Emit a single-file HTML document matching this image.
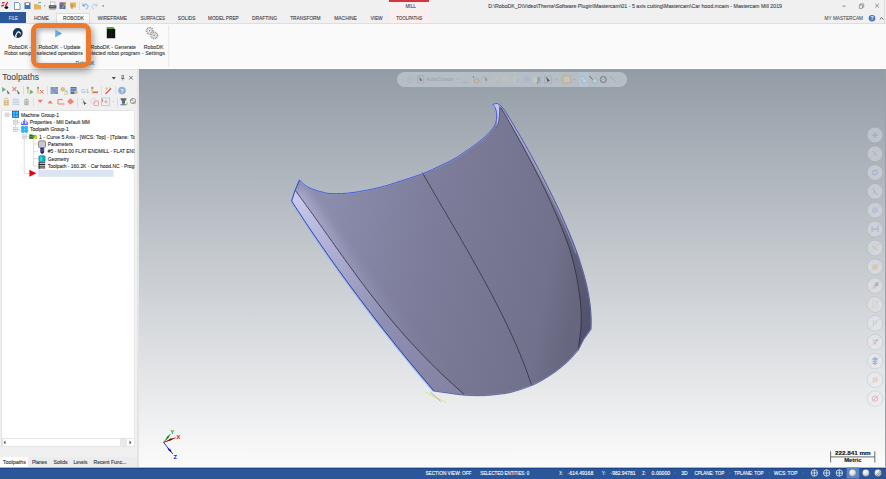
<!DOCTYPE html>
<html><head><meta charset="utf-8">
<style>
*{margin:0;padding:0;box-sizing:border-box}
html,body{width:886px;height:479px;overflow:hidden;background:#f0f0f0;font-family:"Liberation Sans",sans-serif}
.a{position:absolute}
.t{position:absolute;white-space:nowrap;line-height:1;color:#444}
#title{left:0;top:0;width:886px;height:24px;background:#f0f0f0}
#ribbon{left:0;top:23.3px;width:886px;height:45.7px;background:#fafafa;border-top:1.3px solid #dedede;border-bottom:1.2px solid #fff}
#left{left:0;top:69px;width:139px;height:398px;background:#f0f0f0}
#view{left:139px;top:69px;width:747px;height:398px;background:linear-gradient(#939ca6,#fbfbfb)}
#status{left:0;top:467px;width:886px;height:12px;background:linear-gradient(#a8b8d4 0,#a8b8d4 .8px,#1c4488 .8px,#1c4488 1.8px,#2b579a 2.4px)}
.tab{font-size:5.3px;color:#444;top:15.5px}
.rb{font-size:5.35px;color:#444}
.tr{font-size:5px;color:#222}
.st{font-size:5px;color:#fff;top:471px}
</style></head><body>
<div id="title" class="a">
  <!-- quick access -->
  <svg class="a" style="left:0;top:0" width="110" height="12">
    <path d="M2.2 2.3L4.8 1.9L4.3 3.3L1.8 3.7Z M1.2 5.3L4.3 4.5L3.8 6.1L1.2 6.8Z M4.6 6L7.3 1.8L8.3 2.1L6.3 6.3Z" fill="#dc1438"/>
    <ellipse cx="6.4" cy="7.6" rx="1.9" ry="1.3" fill="#111"/>
    <path d="M14.5 2.5h4l1.5 1.5v5.5h-5.5z" fill="#fff" stroke="#5b7fb8" stroke-width=".8"/>
    <rect x="24.5" y="2.5" width="6" height="6.5" fill="#3b73b9"/><rect x="25.8" y="2.8" width="3.4" height="2.2" fill="#fff"/><rect x="25.8" y="2.5" width="3.4" height=".7" fill="#e05a4a"/>
    <path d="M34 4h3l1 1h3v4.5h-7z" fill="#e4b460"/><path d="M38 3.5l2-1.5 1 1" stroke="#3a9a5a" fill="none" stroke-width=".8"/>
    <circle cx="44.8" cy="5.8" r=".6" fill="#666"/>
    <rect x="50.3" y="2" width="4.6" height="3.2" fill="#fff" stroke="#8a8a8a" stroke-width=".45"/><path d="M48.8 5.2h7.6v3.2h-7.6z" fill="#5a5a5a"/><rect x="49.4" y="8.3" width="6.4" height="1.3" rx=".4" fill="#8a8a8a"/><rect x="50.2" y="6" width="4.8" height=".6" fill="#9a9a9a"/>
    <rect x="59.5" y="2.5" width="6" height="6.5" fill="#3b73b9"/><rect x="60.5" y="2.5" width="4" height="2" fill="#e05a4a"/><path d="M62 8.5l4-6" stroke="#e8a020" stroke-width="1.2"/>
    <rect x="70" y="2.5" width="6" height="5" fill="#e4b460"/><rect x="71.5" y="4" width="1" height="5" fill="#b08040"/>
    <rect x="79" y="2" width=".5" height="8" fill="#ccc"/>
    <path d="M83 3.5v2.5h2.5 M83.2 5.8c1.5-2.5 4.5-2 4.8 0.5 0 1.5-1 2.5-2 3" stroke="#5b8ed0" stroke-width=".8" fill="none"/>
    <path d="M97 3.5v2.5h-2.5 M96.8 5.8c-1.5-2.5-4.5-2-4.8 0.5 0 1.5 1 2.5 2 3" stroke="#a8c0e0" stroke-width=".8" fill="none"/>
    <rect x="102.5" y="5" width="1.2" height="1.6" fill="#777"/>
  </svg>
  <div class="a" style="left:884.3px;top:0;width:.8px;height:24px;background:#dcdcdc"></div>
  <!-- contextual tab -->
  <div class="a" style="left:389px;top:0;width:40px;height:24px;background:#fbeeee"></div>
  <div class="a" style="left:389px;top:0;width:40px;height:1.8px;background:#d4343e"></div>
  <svg class="a" style="left:840px;top:3px" width="8" height="6"><path d="M2.3 3.1h3.4" stroke="#555" stroke-width=".6"/></svg>
  <svg class="a" style="left:858px;top:3px" width="8" height="6"><rect x="1.2" y="2" width="3.2" height="3.2" fill="none" stroke="#555" stroke-width=".5"/><path d="M2.4 2V.9h3.3v3.3h-1.3" fill="none" stroke="#555" stroke-width=".5"/></svg>
  <svg class="a" style="left:874px;top:3px" width="6" height="6"><path d="M1.2 .8l3.8 3.8M5 .8L1.2 4.6" stroke="#444" stroke-width=".55"/></svg>
  <!-- tabs -->
  <div class="a" style="left:0;top:12.2px;width:26.2px;height:11.6px;background:#2b579a"></div>
  <div class="a" style="left:55.6px;top:13px;width:34.8px;height:11.6px;background:#fafafa;border:1px solid #dcdcdc;border-bottom:none"></div>
  <svg class="a" style="left:867px;top:14px" width="18" height="9"><circle cx="5" cy="4.3" r="3.3" fill="#4a78b8"/><text x="5" y="6.4" font-size="5" fill="#fff" text-anchor="middle" font-family="Liberation Sans" font-weight="bold">?</text><path d="M12.8 5.4l1.8-1.7 1.8 1.7" stroke="#333" stroke-width=".8" fill="none"/></svg>
</div>

<div id="ribbon" class="a">
  <svg class="a" style="left:0;top:-0.6px" width="175" height="44">
    <circle cx="17.8" cy="9" r="4.9" fill="#17365d"/>
    <path d="M15.4 12.2l1.6-3.2c.8-1.4 2.6-1.6 3.4.2" stroke="#fff" stroke-width="1.1" fill="none"/><path d="M14.8 12.6h2.2" stroke="#fff" stroke-width=".8"/><circle cx="20.4" cy="9.8" r=".6" fill="#fff"/>
    <defs><linearGradient id="gPlay" x1="0" y1="0" x2="1" y2="1"><stop offset="0" stop-color="#8ccff0"/><stop offset="1" stop-color="#2a8ad8"/></linearGradient></defs><path d="M55.2 5.6v7.6l6.8-3.8z" fill="url(#gPlay)"/>
    <path d="M106.8 3.6h6.6l1.8 1.8v8.9h-8.4z" fill="#121212"/><path d="M106.8 3.6h6.6l1.3 1.3h-7.9z" fill="#5aa02c"/><path d="M109 6v7.5M111.5 6v7.5" stroke="#2a2a2a" stroke-width=".4"/>
    <circle cx="149.6" cy="6.8" r="3.3" fill="#fafafa" stroke="#8a8a8a" stroke-width="1.3" stroke-dasharray="1 .75"/><circle cx="149.6" cy="6.8" r="2.2" fill="none" stroke="#9a9a9a" stroke-width=".5"/>
    <circle cx="154.2" cy="11.4" r="3.3" fill="#fafafa" stroke="#8a8a8a" stroke-width="1.3" stroke-dasharray="1 .75"/><circle cx="154.2" cy="11.4" r="2.2" fill="none" stroke="#9a9a9a" stroke-width=".5"/>
    <circle cx="149.6" cy="6.8" r=".8" fill="#777"/><circle cx="154.2" cy="11.4" r=".8" fill="#777"/>
    <rect x="168.5" y="1" width=".6" height="42" fill="#dcdcdc"/>
  </svg>
</div>


<div id="left" class="a">
  <div class="a" style="left:0;top:0;width:139px;height:1.3px;background:#e2e2e2"></div>
  <svg class="a" style="left:110px;top:4.5px" width="28" height="8">
    <path d="M1.8 3l2 2.5 2-2.5z" fill="#444"/>
    <path d="M11.5 1.5h2.5M12 1.5v3h1.5v-3M11 4.5h3.5M12.75 4.5v2" stroke="#555" stroke-width=".6" fill="none"/>
    <path d="M19.2 2l3.5 3.5M22.7 2l-3.5 3.5" stroke="#444" stroke-width=".7"/>
  </svg>
  <div class="a" style="left:137.4px;top:0;width:1.6px;height:398px;background:#e4e4e4"></div>
</div>

<!-- left toolbar icons -->
<svg class="a" style="left:0;top:84px" width="139" height="24">
 <g transform="translate(0,-84)">
  <!-- row1 -->
  <path d="M2 87v5l4.2-2.5z" fill="#6db291"/><path d="M6.6 89.8l3.4 3.6h-1.4l-.7 1.1z" fill="#666"/>
  <path d="M12.5 87.2l3.8 3.6M16.3 87.2l-3.8 3.6" stroke="#e88272" stroke-width="1.1"/><path d="M16.8 89.8l3.4 3.6h-1.4l-.7 1.1z" fill="#666"/>
  <rect x="23" y="86" width=".6" height="9" fill="#d0d0d0"/>
  <rect x="27" y="87" width="1.6" height="6.5" fill="#e8c860"/><rect x="26.8" y="86.8" width="2" height="2" fill="#999"/><path d="M29.8 89.5v5l3.8-2.5z" fill="#6db291"/>
  <rect x="37.2" y="87" width="1.6" height="6.5" fill="#e8c860"/><rect x="37" y="86.8" width="2" height="2" fill="#999"/><path d="M40 90l3.5 3.5M43.5 90l-3.5 3.5" stroke="#e07060" stroke-width="1"/>
  <rect x="47.2" y="86" width=".6" height="9" fill="#d0d0d0"/>
  <rect x="50.6" y="87" width="7.4" height="7" fill="#6582b0"/><path d="M50.6 89l2-2M50.6 91l4-4M50.6 93l6-6M51.6 94l6.4-6.4M53.6 94l4.4-4.4M55.6 94l2.4-2.4M50.6 89l5 5M50.6 91l3 3M52.6 87l5.4 5.4M54.6 87l3.4 3.4" stroke="#c4d2e6" stroke-width=".45"/>
  <circle cx="62.8" cy="89.3" r="2.4" fill="#dcc08c"/><rect x="64.3" y="90.2" width="3.6" height="4.6" fill="#e4f2f0" stroke="#d8c8a0" stroke-width=".5"/><path d="M65.2 91.5h1.8v2" stroke="#6ab" stroke-width=".5" fill="none"/>
  <rect x="70.5" y="87" width="6" height="7" fill="#4a78b0"/><path d="M71 88.5h5M71 90h5M71 91.5h5" stroke="#b8cce8" stroke-width=".5"/><circle cx="76" cy="92.5" r="1.8" fill="#e8b870"/>
  <text x="81" y="93.2" font-size="6" fill="#8ab0d8" font-family="Liberation Sans">G1</text>
  <rect x="91.5" y="87" width="1.6" height="6.5" fill="#e8c860"/><rect x="91.3" y="86.8" width="2" height="2" fill="#999"/><rect x="93" y="91.5" width="5" height="1.6" fill="#e06060"/>
  <rect x="101.2" y="86" width=".6" height="9" fill="#d0d0d0"/>
  <path d="M105.5 94l5.5-5.5" stroke="#e05a4a" stroke-width="1.3"/><circle cx="106.5" cy="88.5" r="1.3" fill="#e8c860"/><path d="M109 87.5l2.5 1.5" stroke="#888" stroke-width=".5"/>
  <rect x="115.6" y="86" width=".6" height="9" fill="#d0d0d0"/>
  <circle cx="122" cy="90.5" r="3.8" fill="#8fb0d8"/><text x="122" y="92.6" font-size="5" fill="#fff" text-anchor="middle" font-family="Liberation Sans" font-weight="bold">?</text>
  <!-- row2 -->
  <rect x="3.8" y="100.3" width="5" height="5.2" rx=".6" fill="#d6ba84"/><path d="M4.6 100.5v-.8a1.7 1.7 0 0 1 3.4 0v.8" stroke="#d6ba84" stroke-width=".9" fill="none"/><rect x="5.3" y="101.3" width="2" height=".7" fill="#f4ecd8"/><rect x="5.3" y="103.2" width="2" height=".7" fill="#f4ecd8"/>
  <path d="M12.5 99.2c2 -.5 3 .5 6 0M12.5 100.9c2 -.5 3 .5 7 0M12.5 102.6c2 -.5 3 .5 6.5 0M12.5 104.3c2 -.5 3 .5 7 0" stroke="#9cb6d6" stroke-width=".6" fill="none"/>
  <path d="M24.3 105.3v-4.5a2.2 2.2 0 0 1 4.4 0v4.5z" fill="#b4b4b4"/><circle cx="25.6" cy="100.6" r=".6" fill="#eee"/><circle cx="27.4" cy="100.6" r=".6" fill="#eee"/><path d="M25 103h3" stroke="#eee" stroke-width=".4"/>
  <rect x="33.4" y="97.5" width=".6" height="9" fill="#d0d0d0"/>
  <path d="M37.4 99.7h5.6l-2.8 3.4z" fill="#e8806e"/>
  <path d="M47.6 103.5h5.2l-2.6-3.3z" fill="#e8806e"/>
  <path d="M63 99.6h-5v4.4h5.5" stroke="#e8806e" stroke-width="1" fill="none"/><path d="M63.3 103l1.1 1-1.1 1" stroke="#e8806e" stroke-width=".7" fill="none"/>
  <path d="M70.5 98.2l3.4 3.3-3.4 3.3-3.4-3.3z" fill="#ec8676"/>
  <rect x="77.3" y="97.5" width=".6" height="9" fill="#d0d0d0"/>
  <path d="M81 99.5l3 -0.5" stroke="#bbb" stroke-width=".6"/><path d="M83 100l3.5 4h-1.5l-.8 1.3z" fill="#555"/><path d="M81 103h2" stroke="#ccc" stroke-width=".6"/>
  <circle cx="93.5" cy="101" r="2.7" fill="none" stroke="#ccc" stroke-width=".6"/><rect x="94" y="101" width="4.6" height="4.6" rx=".8" fill="none" stroke="#e89080" stroke-width=".8"/>
  <rect x="101.5" y="98" width="8.2" height="7.5" fill="#eaf2fb" stroke="#9cc0e8" stroke-width=".7"/><circle cx="106" cy="101.8" r="1.7" fill="#e8c090"/><rect x="102" y="99" width=".8" height="3" fill="#e05050"/>
  <path d="M112.6 101.2h1.6l-.8 .9z" fill="#999"/>
  <rect x="117.3" y="97.5" width=".6" height="9" fill="#d0d0d0"/>
  <path d="M120.5 98.3h6v1l-1.5 2v2.5h-3v-2.5l-1.5-2z" fill="#666"/><rect x="120.5" y="104" width="6" height="1.3" fill="#5a90d0"/><rect x="126.5" y="102" width="1.2" height="3" fill="#e8c860"/>
  <circle cx="133" cy="101" r="2.7" fill="#fff" stroke="#555" stroke-width=".6"/><path d="M131 100.5c1-1 2-.5 2.5 .5M132.5 103c.5-1 1.5-1 2.5-1" stroke="#333" stroke-width=".6" fill="none"/><path d="M134.5 102.5l1.5 2" stroke="#e8c860" stroke-width=".9"/>
 </g>
</svg>
<!-- tree -->
<div class="a" style="left:1px;top:110px;width:133px;height:337px;background:#fff;border-top:1px solid #e2e2e2;border-left:1px solid #e2e2e2"></div>
<div class="a" style="left:133.7px;top:110px;width:1.8px;height:337px;background:#e8e8e8"></div>
<svg class="a" style="left:0;top:108px" width="136" height="72">
 <g transform="translate(0,-108)">
  <!-- lines -->
  <path d="M24.2 139v34.5h5M33.6 139v27M33.6 144h4.5M33.6 151.4h4.5M33.6 158.6h4.5M33.6 166h4.5M9 115h2.5M17.5 122.3h2.5M17.5 129.5h2.5M26.5 136.8h2.5M15.5 118v9.5M7 117v-0" stroke="#c8c8c8" stroke-width=".6" fill="none"/>
  <!-- expanders -->
  <rect x="5" y="113" width="4" height="3.7" fill="#eeeeee" stroke="#b8b8b8" stroke-width=".5"/><path d="M5.8 114.85h2.4" stroke="#99a" stroke-width=".5"/>
  <rect x="13.5" y="120.2" width="4" height="4" fill="#eeeeee" stroke="#b8b8b8" stroke-width=".5"/><path d="M14.3 122.2h2.4" stroke="#88a" stroke-width=".5"/>
  <rect x="13.5" y="127.6" width="4" height="3.8" fill="#eeeeee" stroke="#b8b8b8" stroke-width=".5"/><path d="M14.3 129.5h2.4" stroke="#88a" stroke-width=".5"/>
  <rect x="22.4" y="134.8" width="4" height="3.9" fill="#eeeeee" stroke="#b8b8b8" stroke-width=".5"/><path d="M23.2 136.75h2.4" stroke="#99a" stroke-width=".5"/>
  <!-- icons -->
  <rect x="12" y="110.8" width="7" height="7" fill="#4a48c8"/><rect x="12.8" y="111.6" width="2.5" height="2.5" fill="#19d0f0"/><rect x="15.7" y="111.6" width="2.5" height="2.5" fill="#19d0f0"/><rect x="12.8" y="114.5" width="2.5" height="2.5" fill="#19d0f0"/><rect x="15.7" y="114.5" width="2.5" height="2.5" fill="#19d0f0"/>
  <rect x="21" y="124.1" width="6.8" height=".7" fill="#2020e0"/><rect x="21.6" y="121.9" width=".6" height="2.3" fill="#2020e0"/><rect x="23" y="120.6" width=".6" height="3.6" fill="#2020e0"/><rect x="24.4" y="118.9" width=".6" height="5.3" fill="#2020e0"/><rect x="25.8" y="120.6" width=".6" height="3.6" fill="#2020e0"/><rect x="27.1" y="121.9" width=".6" height="2.3" fill="#2020e0"/>
  <g fill="#19c8f5" stroke="#3a5ae8" stroke-width=".35"><circle cx="22.8" cy="127.8" r="1.75"/><circle cx="26.2" cy="127.8" r="1.75"/><circle cx="22.8" cy="131" r="1.75"/><circle cx="26.2" cy="131" r="1.75"/></g>
  <path d="M29.4 134.5h3l1 1h3v3.6h-7z" fill="#2a4a1a"/><path d="M30 136l3 -1 3.5 1-1 3h-5z" fill="#4aa030"/><path d="M33 139l2.5-3.5 1.3 .5-1.2 3z" fill="#e8e010"/><path d="M31 137.5l2 1" stroke="#1a3ad0" stroke-width=".8"/>
  <rect x="38.5" y="140.8" width="7" height="6.8" rx="1.3" fill="#c8c8c8" stroke="#555" stroke-width=".6"/>
  <path d="M40.5 148h3.4v4.4l-1.7 1.6-1.7-1.6z" fill="#1a2880" stroke="#0a0a40" stroke-width=".3"/><path d="M40.6 149.8l3.2-1.2M40.6 151.6l3.2-1.2" stroke="#7090f0" stroke-width=".5"/>
  <rect x="38.9" y="155.8" width="6.2" height="6" rx="1" fill="#12c4cc" stroke="#055a60" stroke-width=".6"/><path d="M41.2 156.6v4.4" stroke="#c8f8f8" stroke-width=".5"/><path d="M43 156.6v4.4" stroke="#088a90" stroke-width=".5"/>
  <rect x="38.4" y="162.2" width="6.8" height="7.1" fill="#f4f4f4"/><path d="M38.4 162.8h6.8M38.4 164.5h6.8M38.4 166.2h6.8M38.4 167.9h6.8" stroke="#151515" stroke-width=".9"/><path d="M39.2 162.2v7.1" stroke="#151515" stroke-width=".6"/>
  <path d="M29.4 169.7v7.1l7-3.55z" fill="#e80010"/>
  <rect x="37.8" y="169.8" width="75.6" height="7" fill="#dae4f3"/>
 </g>
</svg>

<!-- scrollbar -->
<div class="a" style="left:1.5px;top:438px;width:133px;height:9px;background:#fff;border:1px solid #e4e4e4"></div>
<div class="a" style="left:120px;top:439px;width:7px;height:7px;background:#e8e8e8"></div>
<svg class="a" style="left:0;top:438px" width="136" height="9"><path d="M5.5 2.5v4l-2-2z" fill="#555"/><path d="M129.5 2.5v4l2-2z" fill="#555"/></svg>
<!-- bottom tabs -->
<div class="a" style="left:0;top:457px;width:137px;height:10px;background:#ececec"></div>
<div class="a" style="left:0;top:457px;width:28px;height:10px;background:#fff"></div>
<div id="view" class="a"></div>
<!--HOOD--><svg class="a" style="left:0;top:0" width="886" height="479">
 <defs>
  <linearGradient id="gMain" gradientUnits="userSpaceOnUse" x1="320" y1="230" x2="580" y2="280">
   <stop offset="0" stop-color="#8c8cac"/><stop offset=".3" stop-color="#80809f"/><stop offset=".6" stop-color="#787894"/><stop offset=".88" stop-color="#71718c"/><stop offset="1" stop-color="#66667f"/>
  </linearGradient>
  <linearGradient id="gHi" gradientUnits="userSpaceOnUse" x1="318" y1="222" x2="334" y2="210">
   <stop offset="0" stop-color="#b4b4d8" stop-opacity=".75"/><stop offset="1" stop-color="#b4b4d8" stop-opacity="0"/>
  </linearGradient>
  <linearGradient id="gFlL" gradientUnits="userSpaceOnUse" x1="295" y1="190" x2="440" y2="390">
   <stop offset="0" stop-color="#cbcbf0"/><stop offset=".3" stop-color="#adadd4"/><stop offset=".65" stop-color="#8e8eb2"/><stop offset="1" stop-color="#8484a4"/>
  </linearGradient>
  <linearGradient id="gFlR" gradientUnits="userSpaceOnUse" x1="500" y1="105" x2="590" y2="340">
   <stop offset="0" stop-color="#a4a4cc"/><stop offset=".3" stop-color="#8a8aa8"/><stop offset=".6" stop-color="#60607a"/><stop offset="1" stop-color="#50506a"/>
  </linearGradient>
 </defs>
 <path d="M299.4 179.8 C300.3 180.7 303.0 183.7 305.0 185.2 C307.0 186.7 308.5 187.5 311.3 188.6 C314.1 189.7 318.5 191.2 322.0 192.0 C325.5 192.8 327.0 193.5 332.2 193.6 C337.4 193.7 345.0 193.6 353.0 192.5 C361.0 191.4 372.2 189.2 380.0 187.3 C387.8 185.4 393.3 183.3 400.0 181.2 C406.7 179.1 414.6 176.6 420.0 174.6 C425.4 172.6 427.3 171.8 432.5 169.4 C437.7 167.0 446.7 162.7 451.3 160.3 C455.9 157.9 455.8 157.9 460.0 155.1 C464.2 152.3 472.0 147.0 476.7 143.4 C481.4 139.8 485.3 136.6 488.4 133.4 C491.5 130.2 493.7 127.3 495.1 124.2 C496.5 121.1 496.7 117.8 496.7 115.0 C496.7 112.2 495.8 109.3 495.1 107.5 C494.4 105.7 493.0 104.8 492.6 104.2 L494.6 103.8 L497.5 103.4 L501.70 106.40 L504.57 110.18 L506.94 113.95 L509.28 117.73 L511.58 121.51 L513.86 125.28 L516.12 129.06 L518.34 132.83 L520.55 136.61 L522.72 140.39 L524.88 144.16 L527.01 147.94 L529.12 151.72 L531.22 155.49 L533.28 159.27 L535.33 163.04 L537.36 166.82 L539.37 170.60 L541.36 174.37 L543.33 178.15 L545.28 181.93 L547.20 185.70 L549.11 189.48 L550.99 193.25 L552.85 197.03 L554.69 200.81 L556.50 204.58 L558.29 208.36 L560.05 212.14 L561.79 215.91 L563.49 219.69 L565.17 223.46 L566.82 227.24 L568.43 231.02 L570.00 234.79 L571.54 238.57 L573.05 242.35 L574.51 246.12 L575.93 249.90 L577.30 253.67 L578.63 257.45 L579.90 261.23 L581.13 265.00 L582.30 268.78 L583.41 272.56 L584.47 276.33 L585.46 280.11 L586.38 283.88 L587.23 287.66 L588.01 291.44 L588.72 295.21 L589.35 298.99 L589.89 302.77 L590.34 306.54 L590.71 310.32 L590.98 314.09 L591.15 317.87 L591.22 321.65 L591.19 325.42 L591.04 329.20 L583.5 339.7 L578.30 350.10  C576.7 351.8 572.5 357.0 568.9 360.5 C565.2 364.0 560.9 367.7 556.4 371.0 C551.9 374.3 546.0 378.0 541.8 380.4 C537.6 382.8 536.2 383.7 531.3 385.6 C526.4 387.5 517.7 390.5 512.5 391.9 C507.3 393.3 504.8 393.5 500.0 394.1 C495.2 394.7 489.4 395.4 483.5 395.6 C477.6 395.8 470.6 395.6 464.7 395.2 C458.8 394.8 453.2 393.7 448.0 393.0 C442.8 392.3 435.8 391.3 433.4 391.0 L433.59 391.00 L430.84 387.78 L428.10 384.56 L425.37 381.34 L422.66 378.13 L419.95 374.91 L417.26 371.69 L414.58 368.47 L411.91 365.25 L409.25 362.03 L406.60 358.81 L403.97 355.59 L401.35 352.38 L398.74 349.16 L396.14 345.94 L393.55 342.72 L390.98 339.50 L388.41 336.28 L385.86 333.06 L383.32 329.85 L380.79 326.63 L378.28 323.41 L375.77 320.19 L373.28 316.97 L370.80 313.75 L368.33 310.53 L365.87 307.32 L363.43 304.10 L360.99 300.88 L358.57 297.66 L356.16 294.44 L353.76 291.22 L351.37 288.00 L349.00 284.78 L346.64 281.57 L344.28 278.35 L341.95 275.13 L339.62 271.91 L337.30 268.69 L335.00 265.47 L332.70 262.25 L330.42 259.04 L328.16 255.82 L325.90 252.60 L323.65 249.38 L321.42 246.16 L319.20 242.94 L316.99 239.72 L314.79 236.51 L312.60 233.29 L310.43 230.07 L308.27 226.85 L306.11 223.63 L303.97 220.41 L301.85 217.19 L299.73 213.97 L297.63 210.76 L295.54 207.54 L293.45 204.32 L291.39 201.10 L294.8 190.7 Z" fill="url(#gMain)"/>
 <clipPath id="cMain"><path d="M299.4 179.8 C300.3 180.7 303.0 183.7 305.0 185.2 C307.0 186.7 308.5 187.5 311.3 188.6 C314.1 189.7 318.5 191.2 322.0 192.0 C325.5 192.8 327.0 193.5 332.2 193.6 C337.4 193.7 345.0 193.6 353.0 192.5 C361.0 191.4 372.2 189.2 380.0 187.3 C387.8 185.4 393.3 183.3 400.0 181.2 C406.7 179.1 414.6 176.6 420.0 174.6 C425.4 172.6 427.3 171.8 432.5 169.4 C437.7 167.0 446.7 162.7 451.3 160.3 C455.9 157.9 455.8 157.9 460.0 155.1 C464.2 152.3 472.0 147.0 476.7 143.4 C481.4 139.8 485.3 136.6 488.4 133.4 C491.5 130.2 493.7 127.3 495.1 124.2 C496.5 121.1 496.7 117.8 496.7 115.0 C496.7 112.2 495.8 109.3 495.1 107.5 C494.4 105.7 493.0 104.8 492.6 104.2 L494.6 103.8 L497.5 103.4 L501.70 106.40 L504.57 110.18 L506.94 113.95 L509.28 117.73 L511.58 121.51 L513.86 125.28 L516.12 129.06 L518.34 132.83 L520.55 136.61 L522.72 140.39 L524.88 144.16 L527.01 147.94 L529.12 151.72 L531.22 155.49 L533.28 159.27 L535.33 163.04 L537.36 166.82 L539.37 170.60 L541.36 174.37 L543.33 178.15 L545.28 181.93 L547.20 185.70 L549.11 189.48 L550.99 193.25 L552.85 197.03 L554.69 200.81 L556.50 204.58 L558.29 208.36 L560.05 212.14 L561.79 215.91 L563.49 219.69 L565.17 223.46 L566.82 227.24 L568.43 231.02 L570.00 234.79 L571.54 238.57 L573.05 242.35 L574.51 246.12 L575.93 249.90 L577.30 253.67 L578.63 257.45 L579.90 261.23 L581.13 265.00 L582.30 268.78 L583.41 272.56 L584.47 276.33 L585.46 280.11 L586.38 283.88 L587.23 287.66 L588.01 291.44 L588.72 295.21 L589.35 298.99 L589.89 302.77 L590.34 306.54 L590.71 310.32 L590.98 314.09 L591.15 317.87 L591.22 321.65 L591.19 325.42 L591.04 329.20 L583.5 339.7 L578.30 350.10  C576.7 351.8 572.5 357.0 568.9 360.5 C565.2 364.0 560.9 367.7 556.4 371.0 C551.9 374.3 546.0 378.0 541.8 380.4 C537.6 382.8 536.2 383.7 531.3 385.6 C526.4 387.5 517.7 390.5 512.5 391.9 C507.3 393.3 504.8 393.5 500.0 394.1 C495.2 394.7 489.4 395.4 483.5 395.6 C477.6 395.8 470.6 395.6 464.7 395.2 C458.8 394.8 453.2 393.7 448.0 393.0 C442.8 392.3 435.8 391.3 433.4 391.0 L433.59 391.00 L430.84 387.78 L428.10 384.56 L425.37 381.34 L422.66 378.13 L419.95 374.91 L417.26 371.69 L414.58 368.47 L411.91 365.25 L409.25 362.03 L406.60 358.81 L403.97 355.59 L401.35 352.38 L398.74 349.16 L396.14 345.94 L393.55 342.72 L390.98 339.50 L388.41 336.28 L385.86 333.06 L383.32 329.85 L380.79 326.63 L378.28 323.41 L375.77 320.19 L373.28 316.97 L370.80 313.75 L368.33 310.53 L365.87 307.32 L363.43 304.10 L360.99 300.88 L358.57 297.66 L356.16 294.44 L353.76 291.22 L351.37 288.00 L349.00 284.78 L346.64 281.57 L344.28 278.35 L341.95 275.13 L339.62 271.91 L337.30 268.69 L335.00 265.47 L332.70 262.25 L330.42 259.04 L328.16 255.82 L325.90 252.60 L323.65 249.38 L321.42 246.16 L319.20 242.94 L316.99 239.72 L314.79 236.51 L312.60 233.29 L310.43 230.07 L308.27 226.85 L306.11 223.63 L303.97 220.41 L301.85 217.19 L299.73 213.97 L297.63 210.76 L295.54 207.54 L293.45 204.32 L291.39 201.10 L294.8 190.7 Z"/></clipPath>
 <filter id="fBl" x="-20%" y="-20%" width="140%" height="140%"><feGaussianBlur stdDeviation="5"/></filter>
 <linearGradient id="gHiS" gradientUnits="userSpaceOnUse" x1="300" y1="190" x2="440" y2="390"><stop offset="0" stop-color="#b0b0d6" stop-opacity=".9"/><stop offset=".4" stop-color="#a8a8cc" stop-opacity=".35"/><stop offset=".75" stop-color="#a8a8cc" stop-opacity=".05"/><stop offset="1" stop-color="#a8a8cc" stop-opacity="0"/></linearGradient>
 <g clip-path="url(#cMain)"><path d="M295.48 190.70 L298.03 194.15 L300.56 197.59 L303.08 201.04 L305.58 204.49 L308.07 207.94 L310.55 211.38 L313.02 214.83 L315.49 218.28 L317.94 221.73 L320.39 225.17 L322.84 228.62 L325.28 232.07 L327.73 235.52 L330.17 238.96 L332.62 242.41 L335.07 245.86 L337.52 249.31 L339.98 252.75 L342.45 256.20 L344.93 259.65 L347.42 263.10 L349.92 266.54 L352.43 269.99 L354.96 273.44 L357.51 276.89 L360.07 280.33 L362.65 283.78 L365.25 287.23 L367.88 290.68 L370.53 294.12 L373.20 297.57 L375.90 301.02 L378.63 304.47 L381.38 307.91 L384.17 311.36 L386.99 314.81 L389.84 318.26 L392.73 321.70 L395.65 325.15 L398.61 328.60 L401.61 332.05 L404.65 335.49 L407.73 338.94 L410.86 342.39 L414.03 345.84 L417.25 349.28 L420.51 352.73 L423.82 356.18 L427.19 359.63 L430.60 363.07 L434.07 366.52 L437.60 369.97 L441.18 373.42 L444.82 376.86 L448.51 380.31 L452.27 383.76 L456.09 387.21 L459.98 390.65 L463.92 394.10" stroke="url(#gHiS)" stroke-width="14" fill="none" filter="url(#fBl)"/></g>
 <path d="M433.59 391.00 L430.84 387.78 L428.10 384.56 L425.37 381.34 L422.66 378.13 L419.95 374.91 L417.26 371.69 L414.58 368.47 L411.91 365.25 L409.25 362.03 L406.60 358.81 L403.97 355.59 L401.35 352.38 L398.74 349.16 L396.14 345.94 L393.55 342.72 L390.98 339.50 L388.41 336.28 L385.86 333.06 L383.32 329.85 L380.79 326.63 L378.28 323.41 L375.77 320.19 L373.28 316.97 L370.80 313.75 L368.33 310.53 L365.87 307.32 L363.43 304.10 L360.99 300.88 L358.57 297.66 L356.16 294.44 L353.76 291.22 L351.37 288.00 L349.00 284.78 L346.64 281.57 L344.28 278.35 L341.95 275.13 L339.62 271.91 L337.30 268.69 L335.00 265.47 L332.70 262.25 L330.42 259.04 L328.16 255.82 L325.90 252.60 L323.65 249.38 L321.42 246.16 L319.20 242.94 L316.99 239.72 L314.79 236.51 L312.60 233.29 L310.43 230.07 L308.27 226.85 L306.11 223.63 L303.97 220.41 L301.85 217.19 L299.73 213.97 L297.63 210.76 L295.54 207.54 L293.45 204.32 L291.39 201.10 L294.8 190.7 L295.48 190.70 L298.03 194.15 L300.56 197.59 L303.08 201.04 L305.58 204.49 L308.07 207.94 L310.55 211.38 L313.02 214.83 L315.49 218.28 L317.94 221.73 L320.39 225.17 L322.84 228.62 L325.28 232.07 L327.73 235.52 L330.17 238.96 L332.62 242.41 L335.07 245.86 L337.52 249.31 L339.98 252.75 L342.45 256.20 L344.93 259.65 L347.42 263.10 L349.92 266.54 L352.43 269.99 L354.96 273.44 L357.51 276.89 L360.07 280.33 L362.65 283.78 L365.25 287.23 L367.88 290.68 L370.53 294.12 L373.20 297.57 L375.90 301.02 L378.63 304.47 L381.38 307.91 L384.17 311.36 L386.99 314.81 L389.84 318.26 L392.73 321.70 L395.65 325.15 L398.61 328.60 L401.61 332.05 L404.65 335.49 L407.73 338.94 L410.86 342.39 L414.03 345.84 L417.25 349.28 L420.51 352.73 L423.82 356.18 L427.19 359.63 L430.60 363.07 L434.07 366.52 L437.60 369.97 L441.18 373.42 L444.82 376.86 L448.51 380.31 L452.27 383.76 L456.09 387.21 L459.98 390.65 L463.92 394.10 L448 393 Z" fill="url(#gFlL)"/>
 <path d="M501.70 106.40 L504.57 110.18 L506.94 113.95 L509.28 117.73 L511.58 121.51 L513.86 125.28 L516.12 129.06 L518.34 132.83 L520.55 136.61 L522.72 140.39 L524.88 144.16 L527.01 147.94 L529.12 151.72 L531.22 155.49 L533.28 159.27 L535.33 163.04 L537.36 166.82 L539.37 170.60 L541.36 174.37 L543.33 178.15 L545.28 181.93 L547.20 185.70 L549.11 189.48 L550.99 193.25 L552.85 197.03 L554.69 200.81 L556.50 204.58 L558.29 208.36 L560.05 212.14 L561.79 215.91 L563.49 219.69 L565.17 223.46 L566.82 227.24 L568.43 231.02 L570.00 234.79 L571.54 238.57 L573.05 242.35 L574.51 246.12 L575.93 249.90 L577.30 253.67 L578.63 257.45 L579.90 261.23 L581.13 265.00 L582.30 268.78 L583.41 272.56 L584.47 276.33 L585.46 280.11 L586.38 283.88 L587.23 287.66 L588.01 291.44 L588.72 295.21 L589.35 298.99 L589.89 302.77 L590.34 306.54 L590.71 310.32 L590.98 314.09 L591.15 317.87 L591.22 321.65 L591.19 325.42 L591.04 329.20 L583.5 339.7 L578.3 350.1 L578.30 350.10 L580.85 329.00 L581.07 325.24 L581.19 321.48 L581.22 317.72 L581.17 313.96 L581.03 310.20 L580.79 306.44 L580.45 302.68 L580.04 298.93 L579.54 295.17 L578.96 291.41 L578.41 287.65 L577.84 283.89 L577.20 280.13 L576.50 276.37 L575.73 272.61 L574.91 268.85 L574.03 265.09 L573.09 261.33 L572.10 257.57 L571.06 253.81 L569.98 250.05 L568.67 246.29 L567.32 242.54 L565.93 238.78 L564.50 235.02 L563.03 231.26 L561.53 227.50 L559.99 223.74 L558.43 219.98 L556.85 216.22 L555.26 212.46 L553.63 208.70 L551.98 204.94 L550.30 201.18 L548.60 197.42 L546.87 193.66 L545.12 189.91 L543.30 186.15 L541.46 182.39 L539.60 178.63 L537.72 174.87 L535.82 171.11 L533.90 167.35 L531.96 163.59 L529.99 159.83 L528.01 156.07 L526.01 152.31 L523.99 148.55 L521.94 144.79 L519.87 141.03 L517.83 137.27 L515.78 133.52 L513.70 129.76 L511.60 126.00 L509.47 122.24 L507.32 118.48 L505.13 114.72 L502.92 110.96 L500.67 107.20 L497.5 103.4 Z" fill="url(#gFlR)"/>
 <path d="M422.33 172.50 L424.39 176.12 L426.46 179.74 L428.53 183.36 L430.62 186.97 L432.71 190.59 L434.80 194.21 L436.90 197.83 L439.00 201.45 L441.11 205.07 L443.22 208.69 L445.32 212.31 L447.43 215.92 L449.54 219.54 L451.65 223.16 L453.76 226.78 L455.86 230.40 L457.96 234.02 L460.05 237.64 L462.14 241.25 L464.22 244.87 L466.30 248.49 L468.37 252.11 L470.43 255.73 L472.48 259.35 L474.52 262.97 L476.55 266.58 L478.56 270.20 L480.57 273.82 L482.56 277.44 L484.53 281.06 L486.49 284.68 L488.44 288.30 L490.36 291.92 L492.27 295.53 L494.16 299.15 L496.04 302.77 L497.89 306.39 L499.72 310.01 L501.53 313.63 L503.31 317.25 L505.07 320.86 L506.81 324.48 L508.52 328.10 L510.21 331.72 L511.87 335.34 L513.50 338.96 L515.11 342.58 L516.68 346.19 L518.23 349.81 L519.74 353.43 L521.22 357.05 L522.67 360.67 L524.09 364.29 L525.47 367.91 L526.81 371.53 L528.13 375.14 L529.40 378.76 L530.64 382.38 L531.83 386.00" stroke="#20202c" stroke-width=".65" fill="none"/>
 <path d="M295.48 190.70 L298.03 194.15 L300.56 197.59 L303.08 201.04 L305.58 204.49 L308.07 207.94 L310.55 211.38 L313.02 214.83 L315.49 218.28 L317.94 221.73 L320.39 225.17 L322.84 228.62 L325.28 232.07 L327.73 235.52 L330.17 238.96 L332.62 242.41 L335.07 245.86 L337.52 249.31 L339.98 252.75 L342.45 256.20 L344.93 259.65 L347.42 263.10 L349.92 266.54 L352.43 269.99 L354.96 273.44 L357.51 276.89 L360.07 280.33 L362.65 283.78 L365.25 287.23 L367.88 290.68 L370.53 294.12 L373.20 297.57 L375.90 301.02 L378.63 304.47 L381.38 307.91 L384.17 311.36 L386.99 314.81 L389.84 318.26 L392.73 321.70 L395.65 325.15 L398.61 328.60 L401.61 332.05 L404.65 335.49 L407.73 338.94 L410.86 342.39 L414.03 345.84 L417.25 349.28 L420.51 352.73 L423.82 356.18 L427.19 359.63 L430.60 363.07 L434.07 366.52 L437.60 369.97 L441.18 373.42 L444.82 376.86 L448.51 380.31 L452.27 383.76 L456.09 387.21 L459.98 390.65 L463.92 394.10" stroke="#20202c" stroke-width=".7" fill="none"/>
 <path d="M500.67 107.20 L502.92 110.96 L505.13 114.72 L507.32 118.48 L509.47 122.24 L511.60 126.00 L513.70 129.76 L515.78 133.52 L517.83 137.27 L519.87 141.03 L521.94 144.79 L523.99 148.55 L526.01 152.31 L528.01 156.07 L529.99 159.83 L531.96 163.59 L533.90 167.35 L535.82 171.11 L537.72 174.87 L539.60 178.63 L541.46 182.39 L543.30 186.15 L545.12 189.91 L546.87 193.66 L548.60 197.42 L550.30 201.18 L551.98 204.94 L553.63 208.70 L555.26 212.46 L556.85 216.22 L558.43 219.98 L559.99 223.74 L561.53 227.50 L563.03 231.26 L564.50 235.02 L565.93 238.78 L567.32 242.54 L568.67 246.29 L569.98 250.05 L571.06 253.81 L572.10 257.57 L573.09 261.33 L574.03 265.09 L574.91 268.85 L575.73 272.61 L576.50 276.37 L577.20 280.13 L577.84 283.89 L578.41 287.65 L578.96 291.41 L579.54 295.17 L580.04 298.93 L580.45 302.68 L580.79 306.44 L581.03 310.20 L581.17 313.96 L581.22 317.72 L581.19 321.48 L581.07 325.24 L580.85 329.00 L578.30 350.10" stroke="#20202c" stroke-width=".65" fill="none"/>
 <path d="M492.5 104.3 L494.6 103.8 L497.5 103.4 L499.6 107.2 C499.8 112 499.3 117 498.8 120.5 C498.3 123 497.5 125.5 496.5 127.5 L496.7 123 C497.4 119 497.3 115 497.1 114.7 C496.8 111 495.8 108.5 492.5 104.3 Z" fill="#c4c4ee"/>
 <path d="M499.6 107.2 C499.8 112 499.3 117 498.8 120.5 C498.3 123 497.5 125.5 496.5 127.5" stroke="#2a2a80" stroke-width=".6" fill="none"/>
 <path d="M299.4 179.8 C300.3 180.7 303.0 183.7 305.0 185.2 C307.0 186.7 308.5 187.5 311.3 188.6 C314.1 189.7 318.5 191.2 322.0 192.0 C325.5 192.8 327.0 193.5 332.2 193.6 C337.4 193.7 345.0 193.6 353.0 192.5 C361.0 191.4 372.2 189.2 380.0 187.3 C387.8 185.4 393.3 183.3 400.0 181.2 C406.7 179.1 414.6 176.6 420.0 174.6 C425.4 172.6 427.3 171.8 432.5 169.4 C437.7 167.0 446.7 162.7 451.3 160.3 C455.9 157.9 455.8 157.9 460.0 155.1 C464.2 152.3 472.0 147.0 476.7 143.4 C481.4 139.8 485.3 136.6 488.4 133.4 C491.5 130.2 493.7 127.3 495.1 124.2 C496.5 121.1 496.7 117.8 496.7 115.0 C496.7 112.2 495.8 109.3 495.1 107.5 C494.4 105.7 493.0 104.8 492.6 104.2 L494.6 103.8 L497.5 103.4 L501.7 106.4" stroke="#a8c8f4" stroke-width="1.4" fill="none" opacity=".7"/>
 <path d="M299.4 179.8 C300.3 180.7 303.0 183.7 305.0 185.2 C307.0 186.7 308.5 187.5 311.3 188.6 C314.1 189.7 318.5 191.2 322.0 192.0 C325.5 192.8 327.0 193.5 332.2 193.6 C337.4 193.7 345.0 193.6 353.0 192.5 C361.0 191.4 372.2 189.2 380.0 187.3 C387.8 185.4 393.3 183.3 400.0 181.2 C406.7 179.1 414.6 176.6 420.0 174.6 C425.4 172.6 427.3 171.8 432.5 169.4 C437.7 167.0 446.7 162.7 451.3 160.3 C455.9 157.9 455.8 157.9 460.0 155.1 C464.2 152.3 472.0 147.0 476.7 143.4 C481.4 139.8 485.3 136.6 488.4 133.4 C491.5 130.2 493.7 127.3 495.1 124.2 C496.5 121.1 496.7 117.8 496.7 115.0 C496.7 112.2 495.8 109.3 495.1 107.5 C494.4 105.7 493.0 104.8 492.6 104.2 L494.6 103.8 L497.5 103.4 L501.7 106.4" stroke="#3440c8" stroke-width=".8" fill="none"/>
 <path d="M507.98 117.73 L510.28 121.51 L512.56 125.28 L514.82 129.06 L517.04 132.83 L519.25 136.61 L521.42 140.39 L523.58 144.16 L525.71 147.94 L527.82 151.72 L529.92 155.49 L531.98 159.27 L534.03 163.04 L536.06 166.82 L538.07 170.60 L540.06 174.37 L542.03 178.15 L543.98 181.93 L545.90 185.70 L547.81 189.48 L549.69 193.25 L551.55 197.03 L553.39 200.81 L555.20 204.58 L556.99 208.36 L558.75 212.14 L560.49 215.91 L562.19 219.69 L563.87 223.46 L565.52 227.24 L567.13 231.02 L568.70 234.79 L570.24 238.57 L571.75 242.35 L573.21 246.12 L574.63 249.90 L576.00 253.67" stroke="#c4c4e4" stroke-width=".7" fill="none" opacity=".8"/>
 <path d="M501.70 106.40 L504.57 110.18 L506.94 113.95 L509.28 117.73 L511.58 121.51 L513.86 125.28 L516.12 129.06 L518.34 132.83 L520.55 136.61 L522.72 140.39 L524.88 144.16 L527.01 147.94 L529.12 151.72 L531.22 155.49 L533.28 159.27 L535.33 163.04 L537.36 166.82 L539.37 170.60 L541.36 174.37 L543.33 178.15 L545.28 181.93 L547.20 185.70 L549.11 189.48 L550.99 193.25 L552.85 197.03 L554.69 200.81 L556.50 204.58 L558.29 208.36 L560.05 212.14 L561.79 215.91 L563.49 219.69 L565.17 223.46 L566.82 227.24 L568.43 231.02 L570.00 234.79 L571.54 238.57 L573.05 242.35 L574.51 246.12 L575.93 249.90 L577.30 253.67 L578.63 257.45 L579.90 261.23" stroke="#3434b4" stroke-width=".55" fill="none"/>
 <path d="M501.70 106.40 L504.57 110.18 L506.94 113.95 L509.28 117.73 L511.58 121.51 L513.86 125.28 L516.12 129.06 L518.34 132.83 L520.55 136.61 L522.72 140.39 L524.88 144.16 L527.01 147.94 L529.12 151.72 L531.22 155.49 L533.28 159.27 L535.33 163.04 L537.36 166.82 L539.37 170.60 L541.36 174.37 L543.33 178.15 L545.28 181.93 L547.20 185.70 L549.11 189.48 L550.99 193.25 L552.85 197.03 L554.69 200.81 L556.50 204.58 L558.29 208.36 L560.05 212.14 L561.79 215.91 L563.49 219.69 L565.17 223.46 L566.82 227.24 L568.43 231.02 L570.00 234.79 L571.54 238.57 L573.05 242.35 L574.51 246.12 L575.93 249.90 L577.30 253.67 L578.63 257.45 L579.90 261.23 L581.13 265.00 L582.30 268.78 L583.41 272.56 L584.47 276.33 L585.46 280.11 L586.38 283.88 L587.23 287.66 L588.01 291.44 L588.72 295.21 L589.35 298.99 L589.89 302.77 L590.34 306.54 L590.71 310.32 L590.98 314.09 L591.15 317.87 L591.22 321.65 L591.19 325.42 L591.04 329.20 L583.5 339.7 L578.3 350.1 C576.7 351.8 572.5 357.0 568.9 360.5 C565.2 364.0 560.9 367.7 556.4 371.0 C551.9 374.3 546.0 378.0 541.8 380.4 C537.6 382.8 536.2 383.7 531.3 385.6 C526.4 387.5 517.7 390.5 512.5 391.9 C507.3 393.3 504.8 393.5 500.0 394.1 C495.2 394.7 489.4 395.4 483.5 395.6 C477.6 395.8 470.6 395.6 464.7 395.2 C458.8 394.8 453.2 393.7 448.0 393.0 C442.8 392.3 435.8 391.3 433.4 391.0" stroke="#b8d4f8" stroke-width="1.2" fill="none" opacity=".6"/>
 <path d="M501.70 106.40 L504.57 110.18 L506.94 113.95 L509.28 117.73 L511.58 121.51 L513.86 125.28 L516.12 129.06 L518.34 132.83 L520.55 136.61 L522.72 140.39 L524.88 144.16 L527.01 147.94 L529.12 151.72 L531.22 155.49 L533.28 159.27 L535.33 163.04 L537.36 166.82 L539.37 170.60 L541.36 174.37 L543.33 178.15 L545.28 181.93 L547.20 185.70 L549.11 189.48 L550.99 193.25 L552.85 197.03 L554.69 200.81 L556.50 204.58 L558.29 208.36 L560.05 212.14 L561.79 215.91 L563.49 219.69 L565.17 223.46 L566.82 227.24 L568.43 231.02 L570.00 234.79 L571.54 238.57 L573.05 242.35 L574.51 246.12 L575.93 249.90 L577.30 253.67 L578.63 257.45 L579.90 261.23 L581.13 265.00 L582.30 268.78 L583.41 272.56 L584.47 276.33 L585.46 280.11 L586.38 283.88 L587.23 287.66 L588.01 291.44 L588.72 295.21 L589.35 298.99 L589.89 302.77 L590.34 306.54 L590.71 310.32 L590.98 314.09 L591.15 317.87 L591.22 321.65 L591.19 325.42 L591.04 329.20 L583.5 339.7 L578.3 350.1 C576.7 351.8 572.5 357.0 568.9 360.5 C565.2 364.0 560.9 367.7 556.4 371.0 C551.9 374.3 546.0 378.0 541.8 380.4 C537.6 382.8 536.2 383.7 531.3 385.6 C526.4 387.5 517.7 390.5 512.5 391.9 C507.3 393.3 504.8 393.5 500.0 394.1 C495.2 394.7 489.4 395.4 483.5 395.6 C477.6 395.8 470.6 395.6 464.7 395.2 C458.8 394.8 453.2 393.7 448.0 393.0 C442.8 392.3 435.8 391.3 433.4 391.0" stroke="#2c2c78" stroke-width=".6" fill="none"/>
 <path d="M433.09 391.30 L430.34 388.08 L427.60 384.86 L424.87 381.64 L422.16 378.43 L419.45 375.21 L416.76 371.99 L414.08 368.77 L411.41 365.55 L408.75 362.33 L406.10 359.11 L403.47 355.89 L400.85 352.68 L398.24 349.46 L395.64 346.24 L393.05 343.02 L390.48 339.80 L387.91 336.58 L385.36 333.36 L382.82 330.15 L380.29 326.93 L377.78 323.71 L375.27 320.49 L372.78 317.27 L370.30 314.05 L367.83 310.83 L365.37 307.62 L362.93 304.40 L360.49 301.18 L358.07 297.96 L355.66 294.74 L353.26 291.52 L350.87 288.30 L348.50 285.08 L346.14 281.87 L343.78 278.65 L341.45 275.43 L339.12 272.21 L336.80 268.99 L334.50 265.77 L332.20 262.55 L329.92 259.34 L327.66 256.12 L325.40 252.90 L323.15 249.68 L320.92 246.46 L318.70 243.24 L316.49 240.02 L314.29 236.81 L312.10 233.59 L309.93 230.37 L307.77 227.15 L305.61 223.93 L303.47 220.71 L301.35 217.49 L299.23 214.27 L297.13 211.06 L295.04 207.84 L292.95 204.62 L290.89 201.40 L294.3 190.9 L299.1 179.7" stroke="#90bcf8" stroke-width="1.4" fill="none" opacity=".9"/>
 <path d="M433.84 390.90 L431.09 387.68 L428.35 384.46 L425.62 381.24 L422.91 378.03 L420.20 374.81 L417.51 371.59 L414.83 368.37 L412.16 365.15 L409.50 361.93 L406.85 358.71 L404.22 355.49 L401.60 352.28 L398.99 349.06 L396.39 345.84 L393.80 342.62 L391.23 339.40 L388.66 336.18 L386.11 332.96 L383.57 329.75 L381.04 326.53 L378.53 323.31 L376.02 320.09 L373.53 316.87 L371.05 313.65 L368.58 310.43 L366.12 307.22 L363.68 304.00 L361.24 300.78 L358.82 297.56 L356.41 294.34 L354.01 291.12 L351.62 287.90 L349.25 284.68 L346.89 281.47 L344.53 278.25 L342.20 275.03 L339.87 271.81 L337.55 268.59 L335.25 265.37 L332.95 262.15 L330.67 258.94 L328.41 255.72 L326.15 252.50 L323.90 249.28 L321.67 246.06 L319.45 242.84 L317.24 239.62 L315.04 236.41 L312.85 233.19 L310.68 229.97 L308.52 226.75 L306.36 223.53 L304.22 220.31 L302.10 217.09 L299.98 213.87 L297.88 210.66 L295.79 207.44 L293.70 204.22 L291.64 201.00 L295 190.6 L299.5 179.9" stroke="#22228a" stroke-width=".8" fill="none"/>
 <path d="M425 392 L446 402.5" stroke="#ece040" stroke-width=".8"/>
 <path d="M430.3 392 L440.7 401.4" stroke="#70a8f0" stroke-width=".7"/>
</svg><!--/HOOD--><!--VIEWX-->
<!-- floating toolbar -->
<div class="a" style="left:397px;top:72px;width:230px;height:15px;border-radius:7.5px;background:rgba(204,210,216,.6)"></div>
<div class="a" style="left:578.7px;top:72px;width:9.8px;height:15px;background:rgba(175,205,232,.5)"></div>
<svg class="a" style="left:397px;top:72px" width="230" height="15" opacity=".75">
 <g transform="translate(-397,-72)">
  <rect x="408" y="78.5" width="4.5" height="4" fill="none" stroke="#aab" stroke-width=".6"/><path d="M409 78.5v-1.5a1.3 1.3 0 0 1 2.6 0" stroke="#aab" stroke-width=".6" fill="none"/>
  <rect x="417.3" y="75.5" width="6.5" height="7.5" fill="none" stroke="#99a" stroke-width=".5"/><path d="M419 76.5l3.5 4h-1.4l-.8 1.3z" fill="#555"/>
  <path d="M457 79.2h1.6l-.8 .9z" fill="#889"/>
  <text x="462" y="83" font-size="3" fill="#99a" font-family="Liberation Sans">x,y,z</text><path d="M466 76l1 1" stroke="#7ab" stroke-width=".6"/>
  <circle cx="476.5" cy="81" r="2.3" fill="none" stroke="#b09868" stroke-width=".9"/><circle cx="473.5" cy="77" r=".7" fill="#555"/>
  <rect x="481.5" y="74" width=".5" height="11" fill="#aab2bb"/>
  <path d="M484.5 76l3.5 4.5h-1.5l-.8 1.5z" fill="#888"/>
  <g opacity=".55">
  <path d="M492.5 77.5l3-1.5 3 1.5v3.5l-3 1.5-3-1.5z" fill="#d8c8a0"/><path d="M495.5 79v3.5M492.5 77.5l3 1.5 3-1.5" stroke="#b8a880" stroke-width=".4" fill="none"/><path d="M496 80.5l2.5 2" stroke="#6aa" stroke-width=".7"/>
  <path d="M502.5 77.5l3-1.5 3 1.5v3.5l-3 1.5-3-1.5z" fill="#d8c8a0"/><path d="M505.5 79v3.5" stroke="#7ab" stroke-width=".8"/>
  <path d="M513 77.5l3-1.5 3 1.5v3.5l-3 1.5-3-1.5z" fill="#d8c8a0"/><path d="M516 79l3-1.5v3.5l-3 1.5z" fill="#9ab8d0"/>
  <path d="M524 77.5l3-1.5 3 1.5v3.5l-3 1.5-3-1.5z" fill="#98b4d0"/>
  </g>
  <rect x="533.5" y="77" width="7" height="5.5" fill="#e0d0b0" opacity=".7"/><rect x="537" y="77" width="3.5" height="5.5" fill="#5a90c8" opacity=".7"/><path d="M537 82.5l1 1.5" stroke="#333" stroke-width=".6"/>
  <rect x="544.5" y="76" width="7" height="7" fill="none" stroke="#99a" stroke-width=".5"/><path d="M546 76.5l4 4.5h-1.5l-.8 1.5z" fill="#333"/>
  <path d="M556.2 79.2h1.6l-.8 .9z" fill="#778"/>
  <rect x="562.8" y="76" width="7.4" height="7" fill="#d4c8a4" stroke="#8a7a58" stroke-width=".5" stroke-dasharray=".7 .5"/>
  <path d="M573.8 79.2h1.6l-.8 .9z" fill="#778"/>
  <circle cx="582.8" cy="78.8" r="2.3" fill="#c8d0d8" stroke="#a0a8b4" stroke-width=".6"/><circle cx="584.5" cy="80.8" r="1.8" fill="#d0d8e0" stroke="#a0a8b4" stroke-width=".5"/>
  <path d="M589.5 76l3 3.5" stroke="#333" stroke-width=".8"/><circle cx="595" cy="81" r="2.4" fill="#b8e0e0" stroke="#789" stroke-width=".5"/>
  <circle cx="603.3" cy="79.5" r="3" fill="none" stroke="#556" stroke-width="1"/><path d="M600 79.5h6.5" stroke="#8ab" stroke-width=".7"/>
  <path d="M610.5 77l5 4.5" stroke="#99a" stroke-width=".8"/><path d="M611 76.5l1.5 .5" stroke="#8a8" stroke-width=".6"/>
 </g>
</svg>
<!-- right circle buttons -->
<svg class="a" style="left:860px;top:120px" width="26" height="300">
 <g transform="translate(-860,-120)">
  <g fill="rgba(240,242,245,.35)" stroke="rgba(140,146,156,.3)" stroke-width=".7">
   <circle cx="875" cy="135" r="7.8"/><circle cx="875" cy="153.8" r="7.8"/><circle cx="875" cy="172.6" r="7.8"/><circle cx="875" cy="191.5" r="7.8"/><circle cx="875" cy="210.3" r="7.8"/>
   <circle cx="875" cy="229.1" r="7.8"/><circle cx="875" cy="248" r="7.8"/><circle cx="875" cy="266.8" r="7.8"/><circle cx="875" cy="285.6" r="7.8"/><circle cx="875" cy="304.5" r="7.8"/>
   <circle cx="875" cy="323.3" r="7.8"/><circle cx="875" cy="342.1" r="7.8"/><circle cx="875" cy="361" r="7.8"/><circle cx="875" cy="379.8" r="7.8"/><circle cx="875" cy="398.6" r="7.8"/>
  </g>
  <g stroke="rgba(160,166,176,.45)" stroke-width=".5">
   <path d="M869.5 140.5l11-11M869.5 159.3l11-11M869.5 178.1l11-11M869.5 197l11-11M869.5 215.8l11-11M869.5 234.6l11-11M869.5 253.5l11-11M869.5 272.3l11-11M869.5 291.1l11-11M869.5 310l11-11M869.5 328.8l11-11M869.5 347.6l11-11M869.5 366.5l11-11M869.5 385.3l11-11M869.5 404.1l11-11"/>
  </g>
  <g opacity=".6">
  <path d="M872 135h6M875 132v6" stroke="#7a98c8" stroke-width="1.1"/>
  <path d="M872.5 151.3l5 5" stroke="#7a98c8" stroke-width=".8"/><circle cx="875" cy="153.8" r="1" fill="#c8b080"/>
  <circle cx="875" cy="172.6" r="2.4" fill="none" stroke="#7a98c8" stroke-width=".9"/>
  <path d="M872.5 188.5c2 0 1.5 6 5 6" stroke="#7a98c8" stroke-width=".9" fill="none"/>
  <circle cx="875" cy="210.3" r="2.5" fill="none" stroke="#8aa8d0" stroke-width=".8"/><path d="M872.5 210.3h5M875 207.8v5" stroke="#8aa8d0" stroke-width=".5"/>
  <path d="M872 226v6M878 226v6M872 229.1h6" stroke="#7a98c8" stroke-width=".9"/>
  <path d="M872.5 246l5 4" stroke="#d8b880" stroke-width="1.4"/>
  <rect x="872.5" y="264.3" width="5" height="5" fill="#d8c090"/>
  <rect x="873" y="285" width="3.5" height="3.5" fill="#d8c090"/><rect x="875" y="282.5" width="3.5" height="3.5" fill="#9a90d8"/>
  <rect x="873" y="301" width="4" height="7" fill="none" stroke="#d0c090" stroke-width=".6"/>
  <path d="M873.5 320v6M876 320v4" stroke="#a8c0d8" stroke-width=".9"/>
  <rect x="872.5" y="339.5" width="1.6" height="1.6" fill="#e0c080"/><rect x="874.3" y="339.5" width="1.6" height="1.6" fill="#a0b8d8"/><rect x="876.1" y="339.5" width="1.6" height="1.6" fill="#8a8a8a"/><rect x="873.4" y="341.4" width="1.6" height="1.6" fill="#e890c0"/><rect x="875.2" y="341.4" width="1.6" height="1.6" fill="#c0c0c0"/><rect x="874.3" y="343.2" width="1.6" height="1.2" fill="#e060a0"/>
  <path d="M872.5 359l2.5-1.5 2.5 1.5-2.5 1.5zM872.5 361l2.5 1.5 2.5-1.5M872.5 363l2.5 1.5 2.5-1.5" stroke="#5a80c8" stroke-width=".7" fill="#7a9ad8"/>
  <circle cx="875" cy="379.8" r="2.2" fill="none" stroke="#d8b070" stroke-width="1.3" stroke-dasharray=".9 .6"/><circle cx="875" cy="379.8" r="1" fill="none" stroke="#d8b070" stroke-width=".5"/>
  <circle cx="875" cy="398.6" r="2.7" fill="none" stroke="#e88a78" stroke-width="1"/><path d="M873.1 400.5l3.8-3.8" stroke="#e88a78" stroke-width="1"/>
  </g>
 </g>
</svg>
<div class="a" style="left:884.8px;top:69px;width:1.2px;height:398px;background:#9aa0a8"></div>
<!-- triad -->
<svg class="a" style="left:155px;top:425px" width="30" height="36">
 <g transform="translate(-155,-425)">
  <path d="M163.6 442.4L170.4 434" stroke="#1e8a1e" stroke-width=".9"/><path d="M165.4 440.6L167.2 436.4L169.6 435.2L168.6 437.8Z" fill="#0e7a0e"/>
  <path d="M163.6 442.4L175.6 437.8" stroke="#8a1616" stroke-width=".9"/><path d="M166.4 441.6L170.2 438.6L173.4 438.4L170.6 440.6Z" fill="#801010"/>
  <path d="M163.6 442.4L172.8 454" stroke="#1818d8" stroke-width=".9"/><path d="M167.2 447.4L170.8 449.8L171.6 452.6L168.8 450.4Z" fill="#1010c0"/>
 </g>
</svg>
<!-- scale bar -->
<svg class="a" style="left:828px;top:449px" width="50" height="16">
 <path d="M2.6 2.3v11.2M46.8 2.3v11.2M2.6 7.9h44.2" stroke="#333" stroke-width=".7"/>
</svg>
<!--/VIEWX-->
<div id="status" class="a"></div>
<svg class="a" style="left:660px;top:467px" width="226" height="12">
 <g transform="translate(-660,-467)" >
  <path d="M674.2 472.7h1.6l-.8 .9zM729 472.7h1.6l-.8 .9zM768.4 472.7h1.6l-.8 .9zM802.5 472.7h1.6l-.8 .9z" fill="#8aa6d0"/>
  <g fill="none" stroke="#fff" stroke-width=".7">
   <circle cx="814.3" cy="473" r="3.2"/><path d="M811.1 473h6.4M814.3 469.8v6.4"/>
   <circle cx="826.7" cy="473" r="3.2"/><path d="M823.5 473h6.4M826.7 469.8v6.4"/>
   <circle cx="839.3" cy="473" r="3.2"/><path d="M836.1 473h6.4M839.3 469.8v6.4"/>
  </g>
  <rect x="846.6" y="467.5" width="12.6" height="11" fill="#5b85c0"/>
  <defs><radialGradient id="sph" cx=".4" cy=".35" r=".7"><stop offset="0" stop-color="#fff"/><stop offset=".6" stop-color="#d8d8d8"/><stop offset="1" stop-color="#999"/></radialGradient></defs>
  <circle cx="852.6" cy="473" r="3.4" fill="url(#sph)"/>
  <circle cx="865.9" cy="473" r="3.4" fill="url(#sph)"/>
  <circle cx="878" cy="473" r="3.4" fill="url(#sph)"/><path d="M875.8 475.5l4.8-5M876.8 476.2l4.5-4.6" stroke="#777" stroke-width=".6"/>
 </g>
</svg>
<!--TEXT--><svg class="a" style="left:0;top:0" width="886" height="479" font-family="Liberation Sans">
<defs><clipPath id="tree"><rect x="1" y="108" width="133.6" height="330"/></clipPath></defs>
<text x="405.40" y="8.00" font-size="5.0" fill="#4a4456" stroke="#4a4456" stroke-width="0.1" textLength="10.50" lengthAdjust="spacingAndGlyphs">MILL</text>
<text x="488.30" y="8.00" font-size="5.2" fill="#444" stroke="#444" stroke-width="0.1" textLength="293.70" lengthAdjust="spacingAndGlyphs">D:\RoboDK_D\Video\Theme\Software Plugin\Mastercam\01 - 5 axis cutting\Mastercam\Car hood.mcam - Mastercam Mill 2019</text>
<text x="8.80" y="20.00" font-size="5.4" fill="#e4ecf8" stroke="#e4ecf8" stroke-width="0.02" textLength="9.20" lengthAdjust="spacingAndGlyphs">FILE</text>
<text x="33.90" y="20.00" font-size="5.4" fill="#3c3c3c" stroke="#3c3c3c" stroke-width="0.1" textLength="15.10" lengthAdjust="spacingAndGlyphs">HOME</text>
<text x="63.00" y="20.00" font-size="5.4" fill="#3c3c3c" stroke="#3c3c3c" stroke-width="0.1" textLength="21.00" lengthAdjust="spacingAndGlyphs">ROBODK</text>
<text x="97.70" y="20.00" font-size="5.4" fill="#3c3c3c" stroke="#3c3c3c" stroke-width="0.1" textLength="29.30" lengthAdjust="spacingAndGlyphs">WIREFRAME</text>
<text x="140.50" y="20.00" font-size="5.4" fill="#3c3c3c" stroke="#3c3c3c" stroke-width="0.1" textLength="24.50" lengthAdjust="spacingAndGlyphs">SURFACES</text>
<text x="177.80" y="20.00" font-size="5.4" fill="#3c3c3c" stroke="#3c3c3c" stroke-width="0.1" textLength="17.60" lengthAdjust="spacingAndGlyphs">SOLIDS</text>
<text x="208.00" y="20.00" font-size="5.4" fill="#3c3c3c" stroke="#3c3c3c" stroke-width="0.1" textLength="30.70" lengthAdjust="spacingAndGlyphs">MODEL PREP</text>
<text x="252.00" y="20.00" font-size="5.4" fill="#3c3c3c" stroke="#3c3c3c" stroke-width="0.1" textLength="25.00" lengthAdjust="spacingAndGlyphs">DRAFTING</text>
<text x="290.20" y="20.00" font-size="5.4" fill="#3c3c3c" stroke="#3c3c3c" stroke-width="0.1" textLength="30.40" lengthAdjust="spacingAndGlyphs">TRANSFORM</text>
<text x="334.20" y="20.00" font-size="5.4" fill="#3c3c3c" stroke="#3c3c3c" stroke-width="0.1" textLength="22.70" lengthAdjust="spacingAndGlyphs">MACHINE</text>
<text x="370.40" y="20.00" font-size="5.4" fill="#3c3c3c" stroke="#3c3c3c" stroke-width="0.1" textLength="12.20" lengthAdjust="spacingAndGlyphs">VIEW</text>
<text x="396.20" y="20.00" font-size="5.4" fill="#3c3c3c" stroke="#3c3c3c" stroke-width="0.1" textLength="26.10" lengthAdjust="spacingAndGlyphs">TOOLPATHS</text>
<text x="824.60" y="20.00" font-size="5.4" fill="#555" stroke="#555" stroke-width="0.1" textLength="38.40" lengthAdjust="spacingAndGlyphs">MY MASTERCAM</text>
<text x="8.30" y="49.00" font-size="5.4" fill="#3a3a3a" stroke="#3a3a3a" stroke-width="0.1" textLength="22.70" lengthAdjust="spacingAndGlyphs">RoboDK -</text>
<text x="4.30" y="55.00" font-size="5.4" fill="#3a3a3a" stroke="#3a3a3a" stroke-width="0.1" textLength="27.00" lengthAdjust="spacingAndGlyphs">Robot setup</text>
<text x="38.50" y="49.00" font-size="5.4" fill="#3a3a3a" stroke="#3a3a3a" stroke-width="0.1" textLength="42.10" lengthAdjust="spacingAndGlyphs">RoboDK - Update</text>
<text x="36.50" y="55.00" font-size="5.4" fill="#3a3a3a" stroke="#3a3a3a" stroke-width="0.1" textLength="46.50" lengthAdjust="spacingAndGlyphs">selected operations</text>
<text x="90.50" y="49.00" font-size="5.4" fill="#3a3a3a" stroke="#3a3a3a" stroke-width="0.1" textLength="45.40" lengthAdjust="spacingAndGlyphs">RoboDK - Generate</text>
<text x="86.20" y="55.00" font-size="5.4" fill="#3a3a3a" stroke="#3a3a3a" stroke-width="0.1" textLength="53.80" lengthAdjust="spacingAndGlyphs">selected robot program</text>
<text x="143.80" y="49.00" font-size="5.4" fill="#3a3a3a" stroke="#3a3a3a" stroke-width="0.1" textLength="19.70" lengthAdjust="spacingAndGlyphs">RoboDK</text>
<text x="141.80" y="55.00" font-size="5.4" fill="#3a3a3a" stroke="#3a3a3a" stroke-width="0.1" textLength="23.20" lengthAdjust="spacingAndGlyphs">- Settings</text>
<text x="75.50" y="65.00" font-size="5.4" fill="#6a6a6a" stroke="#6a6a6a" stroke-width="0.1" textLength="19.00" lengthAdjust="spacingAndGlyphs">RoboDK</text>
<text x="2.20" y="80.00" font-size="8.6" fill="#404040" stroke="#404040" stroke-width="0.05" textLength="36.80" lengthAdjust="spacingAndGlyphs">Toolpaths</text>
<text x="21.00" y="117.00" font-size="5.3" fill="#2a2a2a" stroke="#2a2a2a" stroke-width="0.1" textLength="37.90" lengthAdjust="spacingAndGlyphs">Machine Group-1</text>
<text x="29.70" y="124.00" font-size="5.3" fill="#2a2a2a" stroke="#2a2a2a" stroke-width="0.1" textLength="60.10" lengthAdjust="spacingAndGlyphs">Properties - Mill Default MM</text>
<text x="30.00" y="131.00" font-size="5.3" fill="#2a2a2a" stroke="#2a2a2a" stroke-width="0.1" textLength="38.80" lengthAdjust="spacingAndGlyphs">Toolpath Group-1</text>
<text x="39.00" y="139.00" font-size="5.3" fill="#2a2a2a" stroke="#2a2a2a" stroke-width="0.1" textLength="100.84" lengthAdjust="spacingAndGlyphs" clip-path="url(#tree)">1 - Curve 5 Axis - [WCS: Top] - [Tplane: Top]</text>
<text x="47.80" y="146.00" font-size="5.3" fill="#2a2a2a" stroke="#2a2a2a" stroke-width="0.1" textLength="25.00" lengthAdjust="spacingAndGlyphs">Parameters</text>
<text x="47.80" y="153.00" font-size="5.3" fill="#2a2a2a" stroke="#2a2a2a" stroke-width="0.1" textLength="99.75" lengthAdjust="spacingAndGlyphs" clip-path="url(#tree)">#5 - M12.00 FLAT ENDMILL - FLAT ENDMILL</text>
<text x="47.80" y="161.00" font-size="5.3" fill="#2a2a2a" stroke="#2a2a2a" stroke-width="0.1" textLength="21.20" lengthAdjust="spacingAndGlyphs">Geometry</text>
<text x="47.80" y="168.00" font-size="5.3" fill="#2a2a2a" stroke="#2a2a2a" stroke-width="0.1" textLength="95.01" lengthAdjust="spacingAndGlyphs" clip-path="url(#tree)">Toolpath - 160.2K - Car hood.NC - Program</text>
<text x="2.70" y="464.00" font-size="5.3" fill="#333" stroke="#333" stroke-width="0.1" textLength="23.30" lengthAdjust="spacingAndGlyphs">Toolpaths</text>
<text x="32.00" y="464.00" font-size="5.3" fill="#333" stroke="#333" stroke-width="0.1" textLength="15.00" lengthAdjust="spacingAndGlyphs">Planes</text>
<text x="53.60" y="464.00" font-size="5.3" fill="#333" stroke="#333" stroke-width="0.1" textLength="14.10" lengthAdjust="spacingAndGlyphs">Solids</text>
<text x="73.60" y="464.00" font-size="5.3" fill="#333" stroke="#333" stroke-width="0.1" textLength="13.90" lengthAdjust="spacingAndGlyphs">Levels</text>
<text x="93.50" y="464.00" font-size="5.3" fill="#333" stroke="#333" stroke-width="0.1" textLength="32.90" lengthAdjust="spacingAndGlyphs">Recent Func...</text>
<text x="426.00" y="81.00" font-size="5.4" fill="#99a1ad" stroke="#99a1ad" stroke-width="0.05" textLength="27.40" lengthAdjust="spacingAndGlyphs">AutoCursor</text>
<text x="834.90" y="455.00" font-size="5.6" fill="#111" stroke="#111" stroke-width="0.1" font-weight="bold" textLength="35.80" lengthAdjust="spacingAndGlyphs">222.841 mm</text>
<text x="844.20" y="462.00" font-size="5.3" fill="#111" stroke="#111" stroke-width="0.1" font-weight="bold" textLength="17.20" lengthAdjust="spacingAndGlyphs">Metric</text>
<text x="170.40" y="434.00" font-size="5" fill="#20a020" stroke="#20a020" stroke-width="0.1" font-weight="bold" textLength="3.60" lengthAdjust="spacingAndGlyphs">Y</text>
<text x="176.50" y="439.00" font-size="5" fill="#f01818" stroke="#f01818" stroke-width="0.1" font-weight="bold" textLength="3.70" lengthAdjust="spacingAndGlyphs">X</text>
<text x="173.60" y="459.00" font-size="5" fill="#1818f0" stroke="#1818f0" stroke-width="0.1" font-weight="bold" textLength="3.40" lengthAdjust="spacingAndGlyphs">Z</text>
<text x="425.40" y="475.00" font-size="5.0" fill="#ffffff" stroke="#ffffff" stroke-width="0.1" textLength="46.10" lengthAdjust="spacingAndGlyphs">SECTION VIEW: OFF</text>
<text x="480.30" y="475.00" font-size="5.0" fill="#ffffff" stroke="#ffffff" stroke-width="0.1" textLength="48.80" lengthAdjust="spacingAndGlyphs">SELECTED ENTITIES: 0</text>
<text x="559.30" y="475.00" font-size="5.0" fill="#ffffff" stroke="#ffffff" stroke-width="0.1" textLength="3.40" lengthAdjust="spacingAndGlyphs">X:</text>
<text x="567.80" y="475.00" font-size="5.0" fill="#ffffff" stroke="#ffffff" stroke-width="0.1" textLength="25.40" lengthAdjust="spacingAndGlyphs">-614.49168</text>
<text x="602.10" y="475.00" font-size="5.0" fill="#ffffff" stroke="#ffffff" stroke-width="0.1" textLength="3.40" lengthAdjust="spacingAndGlyphs">Y:</text>
<text x="610.60" y="475.00" font-size="5.0" fill="#ffffff" stroke="#ffffff" stroke-width="0.1" textLength="24.90" lengthAdjust="spacingAndGlyphs">-982.94781</text>
<text x="642.30" y="475.00" font-size="5.0" fill="#ffffff" stroke="#ffffff" stroke-width="0.1" textLength="3.40" lengthAdjust="spacingAndGlyphs">Z:</text>
<text x="651.60" y="475.00" font-size="5.0" fill="#ffffff" stroke="#ffffff" stroke-width="0.1" textLength="18.60" lengthAdjust="spacingAndGlyphs">0.00000</text>
<text x="681.20" y="475.00" font-size="5.0" fill="#ffffff" stroke="#ffffff" stroke-width="0.1" textLength="6.30" lengthAdjust="spacingAndGlyphs">3D</text>
<text x="694.40" y="475.00" font-size="5.0" fill="#ffffff" stroke="#ffffff" stroke-width="0.1" textLength="29.90" lengthAdjust="spacingAndGlyphs">CPLANE: TOP</text>
<text x="734.20" y="475.00" font-size="5.0" fill="#ffffff" stroke="#ffffff" stroke-width="0.1" textLength="29.30" lengthAdjust="spacingAndGlyphs">TPLANE: TOP</text>
<text x="774.00" y="475.00" font-size="5.0" fill="#ffffff" stroke="#ffffff" stroke-width="0.1" textLength="23.30" lengthAdjust="spacingAndGlyphs">WCS: TOP</text>
</svg>
<!-- orange highlight -->
<div class="a" style="left:31px;top:23px;width:60px;height:45px;border:5px solid #ec7a2e;border-radius:8px;box-shadow:2px 3px 7px rgba(0,0,0,.38),inset 2px 2px 5px rgba(0,0,0,.32)"></div>
</body></html>
